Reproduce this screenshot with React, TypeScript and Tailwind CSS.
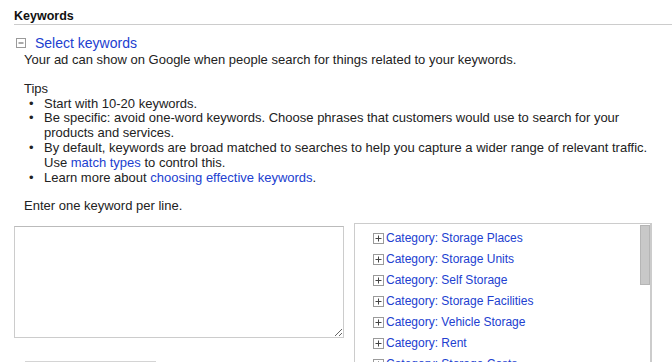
const TIPS_LINK = 'text-[#2140d0]'

const CATEGORIES = [
  'Storage Places',
  'Storage Units',
  'Self Storage',
  'Storage Facilities',
  'Vehicle Storage',
  'Rent',
  'Storage Costs',
]

function MinusBox() {
  return (
    <svg width="10" height="10" viewBox="0 0 10 10" className="shrink-0">
      <rect x="0.5" y="0.5" width="9" height="9" fill="#fff" stroke="#9a9a9a" />
      <path d="M2.5 5h5" stroke="#555" strokeWidth="1" />
    </svg>
  )
}

function PlusBox() {
  return (
    <svg width="11" height="11" viewBox="0 0 11 11" className="shrink-0">
      <rect x="0.5" y="0.5" width="10" height="10" fill="#fff" stroke="#9a9a9a" />
      <path d="M2.5 5.5h6M5.5 2.5v6" stroke="#444" strokeWidth="1" />
    </svg>
  )
}

function Bullet({ children }: { children: React.ReactNode }) {
  return (
    <div className="flex">
      <span className="w-[20px] shrink-0 pl-[5px]">•</span>
      <span className="whitespace-nowrap">{children}</span>
    </div>
  )
}

export default function App() {
  return (
    <div className="h-[362px] overflow-hidden bg-white font-['Liberation_Sans',Arial,sans-serif] text-[13px] leading-[14.8px] text-[#222]">
      {/* Section header */}
      <div className="ml-[14px] pt-[9px] border-b border-[#ccc] text-[12.5px] font-bold leading-[15px] text-[#111]">
        Keywords
      </div>

      {/* Collapsible title */}
      <div className="ml-[16px] mt-[10px] flex items-center h-4">
        <MinusBox />
        <a href="#" className={`ml-[9px] text-[14px] leading-4 ${TIPS_LINK}`}>Select keywords</a>
      </div>

      <div className="ml-[24px]">
        <div className="mt-[2px] whitespace-nowrap">
          Your ad can show on Google when people search for things related to your keywords.
        </div>

        <div className="mt-[14px]">Tips</div>
        <Bullet>Start with 10-20 keywords.</Bullet>
        <Bullet>
          Be specific: avoid one-word keywords. Choose phrases that customers would use to search for your
          <br />
          products and services.
        </Bullet>
        <Bullet>
          By default, keywords are broad matched to searches to help you capture a wider range of relevant traffic.
          <br />
          Use <a href="#" className={TIPS_LINK}>match types</a> to control this.
        </Bullet>
        <Bullet>
          Learn more about <a href="#" className={TIPS_LINK}>choosing effective keywords</a>.
        </Bullet>

        <div className="mt-[13.5px]">Enter one keyword per line.</div>
      </div>

      <div className="ml-[14px] mt-[9px] flex items-start">
        {/* Keyword entry */}
        <div className="w-[330px] shrink-0">
          <textarea className="block mt-[3px] w-[330px] h-[112px] border border-[#ccc] border-t-[#bbb] outline-none" />
          <div className="ml-[11px] mt-[23px] w-[131px] h-[24px] border-t border-[#d4d4d4]" />
        </div>

        {/* Suggestions list */}
        <div className="ml-[10px] w-[298px] h-[160px] shrink-0 flex border-l border-t border-r-2 border-[#ccc]">
          <ul className="flex-1 pl-[18px] pt-[4px] text-[12px]">
            {CATEGORIES.map(c => (
              <li key={c} className="flex items-center h-[21px]">
                <PlusBox />
                <a href="#" className={`ml-[2px] leading-[21px] ${TIPS_LINK}`}>Category: {c}</a>
              </li>
            ))}
          </ul>
          <div className="w-[11px] shrink-0">
            <div className="ml-[1px] mt-[1px] w-[10px] h-[60px] bg-[#c8c8c8] border border-[#b5b5b5]" />
          </div>
        </div>
      </div>
    </div>
  )
}
